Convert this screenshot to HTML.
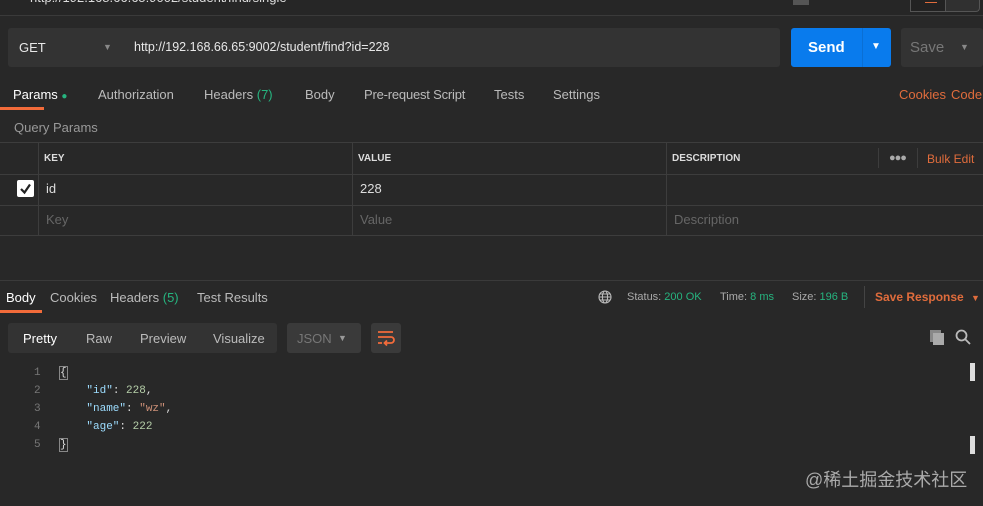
<!DOCTYPE html>
<html><head><meta charset="utf-8"><style>
*{box-sizing:border-box;margin:0;padding:0}
body{width:983px;height:506px;background:#282828;font-family:"Liberation Sans",sans-serif;color:#ccc;position:relative;overflow:hidden;font-size:13px}
.a{position:absolute;white-space:nowrap}
.code{font-family:"Liberation Mono",monospace;font-size:11px}
</style></head><body>
<div class="a" style="left:0;top:0;width:983px;height:16px;background:#262626;border-bottom:1px solid #3a3a3a"></div>
<div class="a" style="left:30px;top:-10px;color:#ddd;font-size:13px">http://192.168.66.65:9002/student/find/single</div>
<div class="a" style="left:793px;top:0;width:16px;height:5px;background:#555"></div>
<div class="a" style="left:910px;top:0;width:70px;height:12px;border:1px solid #555;border-top:none;border-radius:0 0 4px 4px;background:#303030"></div>
<div class="a" style="left:910px;top:0;width:36px;height:12px;border:1px solid #555;border-top:none;background:#222"></div>
<div class="a" style="left:925px;top:2px;width:12px;height:1px;background:#e06c3c"></div>

<div class="a" style="left:8px;top:28px;width:772px;height:39px;background:#333;border-radius:3px"></div>
<div class="a" style="left:19px;top:40px;color:#e8e8e8;font-size:13px">GET</div>
<div class="a" style="left:103px;top:42px;color:#888;font-size:9px">▼</div>
<div class="a" style="left:134px;top:40px;color:#e8e8e8;font-size:12.5px">http://192.168.66.65:9002/student/find?id=228</div>
<div class="a" style="left:791px;top:28px;width:100px;height:39px;background:#097bed;border-radius:3px"></div>
<div class="a" style="left:862px;top:28px;width:1px;height:39px;background:#0a6fd4"></div>
<div class="a" style="left:808px;top:39px;color:#fff;font-weight:bold;font-size:15px">Send</div>
<div class="a" style="left:871px;top:41px;color:#fff;font-size:10px">▼</div>
<div class="a" style="left:901px;top:28px;width:82px;height:39px;background:#333;border-radius:3px"></div>
<div class="a" style="left:910px;top:39px;color:#777;font-size:15px">Save</div>
<div class="a" style="left:960px;top:42px;color:#888;font-size:9px">▼</div>

<div class="a" style="left:13px;top:87px;color:#fff">Params <span style="color:#26b47f;font-size:10px">●</span></div>
<div class="a" style="left:0;top:107px;width:44px;height:3px;background:#f26b3a"></div>
<div class="a" style="left:98px;top:87px;color:#bbb">Authorization</div>
<div class="a" style="left:204px;top:87px;color:#bbb">Headers <span style="color:#26b47f">(7)</span></div>
<div class="a" style="left:305px;top:87px;color:#bbb">Body</div>
<div class="a" style="left:364px;top:87px;color:#bbb;letter-spacing:-0.2px">Pre-request Script</div>
<div class="a" style="left:494px;top:87px;color:#bbb">Tests</div>
<div class="a" style="left:553px;top:87px;color:#bbb">Settings</div>
<div class="a" style="left:899px;top:87px;color:#e06c3c">Cookies</div>
<div class="a" style="left:951px;top:87px;color:#e06c3c">Code</div>

<div class="a" style="left:14px;top:120px;color:#999">Query Params</div>
<div class="a" style="left:0;top:142px;width:983px;height:1px;background:#3d3d3d"></div>
<div class="a" style="left:0;top:174px;width:983px;height:1px;background:#3d3d3d"></div>
<div class="a" style="left:0;top:205px;width:983px;height:1px;background:#3d3d3d"></div>
<div class="a" style="left:0;top:235px;width:983px;height:1px;background:#3d3d3d"></div>
<div class="a" style="left:38px;top:143px;width:1px;height:92px;background:#3d3d3d"></div>
<div class="a" style="left:352px;top:143px;width:1px;height:92px;background:#3d3d3d"></div>
<div class="a" style="left:666px;top:143px;width:1px;height:92px;background:#3d3d3d"></div>
<div class="a" style="left:878px;top:148px;width:1px;height:20px;background:#3d3d3d"></div>
<div class="a" style="left:917px;top:148px;width:1px;height:20px;background:#3d3d3d"></div>
<div class="a" style="left:44px;top:153px;color:#ddd;font-size:10px;font-weight:bold">KEY</div>
<div class="a" style="left:358px;top:153px;color:#ddd;font-size:10px;font-weight:bold">VALUE</div>
<div class="a" style="left:672px;top:153px;color:#ddd;font-size:10px;font-weight:bold">DESCRIPTION</div>
<div class="a" style="left:889px;top:152px;color:#aaa;font-size:11px;letter-spacing:-1px">●●●</div>
<div class="a" style="left:927px;top:152px;color:#e06c3c;font-size:12px">Bulk Edit</div>
<div class="a" style="left:17px;top:180px;width:17px;height:17px;background:#fff;border-radius:2px"></div>
<svg class="a" style="left:17px;top:180px" width="17" height="17"><path d="M4 9 L7.5 12.5 L13 4.5" stroke="#222" stroke-width="2.2" fill="none"/></svg>
<div class="a" style="left:46px;top:181px;color:#ddd">id</div>
<div class="a" style="left:360px;top:181px;color:#ddd">228</div>
<div class="a" style="left:46px;top:212px;color:#666">Key</div>
<div class="a" style="left:360px;top:212px;color:#666">Value</div>
<div class="a" style="left:674px;top:212px;color:#666">Description</div>

<div class="a" style="left:0;top:280px;width:983px;height:1px;background:#3a3a3a"></div>
<div class="a" style="left:6px;top:290px;color:#fff">Body</div>
<div class="a" style="left:0;top:310px;width:42px;height:3px;background:#f26b3a"></div>
<div class="a" style="left:50px;top:290px;color:#bbb">Cookies</div>
<div class="a" style="left:110px;top:290px;color:#bbb">Headers <span style="color:#26b47f">(5)</span></div>
<div class="a" style="left:197px;top:290px;color:#bbb">Test Results</div>
<svg class="a" style="left:598px;top:290px" width="14" height="14" fill="none" stroke="#bbb" stroke-width="1.1"><circle cx="7" cy="7" r="6"/><ellipse cx="7" cy="7" rx="2.6" ry="6"/><path d="M1 7h12M2 4h10M2 10h10"/></svg>
<div class="a" style="left:627px;top:291px;font-size:11px;color:#aaa">Status: <span style="color:#26b47f">200 OK</span></div>
<div class="a" style="left:720px;top:291px;font-size:11px;color:#aaa">Time: <span style="color:#26b47f">8 ms</span></div>
<div class="a" style="left:792px;top:291px;font-size:11px;color:#aaa">Size: <span style="color:#26b47f">196 B</span></div>
<div class="a" style="left:864px;top:286px;width:1px;height:22px;background:#444"></div>
<div class="a" style="left:875px;top:290px;color:#e06c3c;font-weight:bold;font-size:12px">Save Response <span style="font-size:9px;margin-left:4px">▼</span></div>

<div class="a" style="left:8px;top:323px;width:269px;height:30px;background:#333;border-radius:3px"></div>
<div class="a" style="left:23px;top:331px;color:#fff">Pretty</div>
<div class="a" style="left:86px;top:331px;color:#bbb">Raw</div>
<div class="a" style="left:140px;top:331px;color:#bbb">Preview</div>
<div class="a" style="left:213px;top:331px;color:#bbb">Visualize</div>
<div class="a" style="left:287px;top:323px;width:74px;height:30px;background:#3a3a3a;border-radius:3px"></div>
<div class="a" style="left:297px;top:331px;color:#777">JSON</div>
<div class="a" style="left:338px;top:333px;color:#999;font-size:9px">▼</div>
<div class="a" style="left:371px;top:323px;width:30px;height:30px;background:#3a3a3a;border-radius:3px"></div>
<svg class="a" style="left:376px;top:329px" width="20" height="18" fill="none" stroke="#f26b3a" stroke-width="1.8"><path d="M2 3h15M2 8h13a3 3 0 0 1 0 6H9M11 11.5l-2.5 2.5 2.5 2.5M2 14h4"/></svg>
<div class="a" style="left:930px;top:330px;width:11px;height:12px;background:#888"></div>
<div class="a" style="left:933px;top:333px;width:11px;height:12px;background:#aaa"></div>
<svg class="a" style="left:955px;top:329px" width="16" height="16" fill="none" stroke="#bbb" stroke-width="1.8"><circle cx="6.5" cy="6.5" r="5"/><path d="M10 10l5 5"/></svg>

<div class="code a" style="left:34px;top:364px;color:#777;line-height:18px;text-align:right">1<br>2<br>3<br>4<br>5</div>
<div class="code a" style="left:60px;top:364px;line-height:18px;color:#ddd">
<span style="outline:1px solid #888">{</span><br>
&nbsp;&nbsp;&nbsp;&nbsp;<span style="color:#9cdcfe">"id"</span>: <span style="color:#b5cea8">228</span>,<br>
&nbsp;&nbsp;&nbsp;&nbsp;<span style="color:#9cdcfe">"name"</span>: <span style="color:#ce9178">"wz"</span>,<br>
&nbsp;&nbsp;&nbsp;&nbsp;<span style="color:#9cdcfe">"age"</span>: <span style="color:#b5cea8">222</span><br>
<span style="outline:1px solid #888">}</span></div>
<div class="a" style="left:970px;top:363px;width:5px;height:18px;background:#ddd"></div>
<div class="a" style="left:970px;top:436px;width:5px;height:18px;background:#ddd"></div>
<div class="a" style="left:805px;top:466px;color:#aaa;font-size:18px;font-family:'Liberation Sans','Noto Sans CJK SC',sans-serif">@稀土掘金技术社区</div>
</body></html>
